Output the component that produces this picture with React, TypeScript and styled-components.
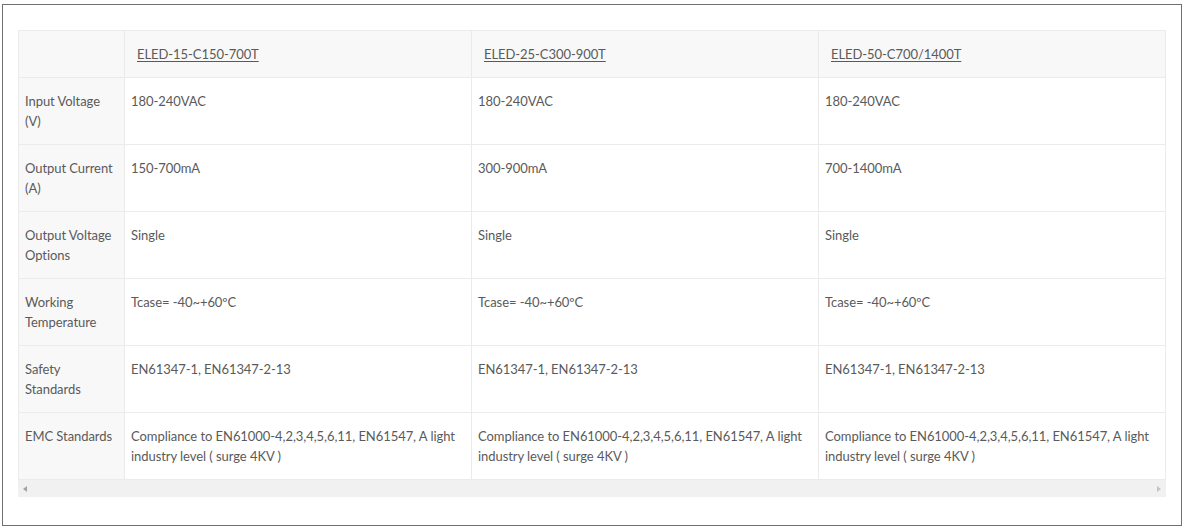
import * as React from "react";
import styled, { createGlobalStyle } from "styled-components";

const GlobalStyle = createGlobalStyle`
  html, body {
    margin: 0;
    padding: 0;
    background: #ffffff;
  }
  body {
    font-family: Lato, "Open Sans", sans-serif;
  }
`;

const Frame = styled.div`
  box-sizing: border-box;
  margin: 4px 0 0 2px;
  width: 1180px;
  height: 522px;
  border: 1px solid #707070;
  padding: 25px 0 0 15px;
`;

const Scroller = styled.div`
  width: 1148px;
`;

const Table = styled.table`
  width: 1148px;
  border-collapse: collapse;
  table-layout: fixed;
  font-size: 13px;
  line-height: 20px;
  letter-spacing: -0.06px;
  color: #5a5a5a;
`;

const Cell = styled.td<{ $head?: boolean; $label?: boolean }>`
  border: 1px solid #ebebeb;
  padding: 13px 6px 13px 6px;
  vertical-align: top;
  text-align: left;
  font-weight: normal;
  background: ${(p) => (p.$head || p.$label ? "#f8f8f8" : "#ffffff")};
  ${(p) => (p.$head ? "padding-left: 12px;" : "")}
`;

const ModelLink = styled.a`
  color: #5a5a5a;
  text-decoration: underline;
  text-underline-offset: 2px;
`;

const ScrollBar = styled.div`
  height: 17px;
  background: #f1f1f1;
  display: flex;
  align-items: center;
  justify-content: space-between;
  padding: 0 5px;
`;

const Arrow = styled.span<{ $dir: "left" | "right" }>`
  width: 0;
  height: 0;
  border-top: 3.5px solid transparent;
  border-bottom: 3.5px solid transparent;
  ${(p) =>
    p.$dir === "left"
      ? "border-right: 4px solid #a3a3a3;"
      : "border-left: 4px solid #c4c4c4;"}
`;

const models = ["ELED-15-C150-700T", "ELED-25-C300-900T", "ELED-50-C700/1400T"];

const rows: { label: string; values: string[] }[] = [
  { label: "Input Voltage (V)", values: ["180-240VAC", "180-240VAC", "180-240VAC"] },
  { label: "Output Current (A)", values: ["150-700mA", "300-900mA", "700-1400mA"] },
  { label: "Output Voltage Options", values: ["Single", "Single", "Single"] },
  {
    label: "Working Temperature",
    values: ["Tcase= -40~+60ºC", "Tcase= -40~+60ºC", "Tcase= -40~+60ºC"],
  },
  {
    label: "Safety Standards",
    values: [
      "EN61347-1, EN61347-2-13",
      "EN61347-1, EN61347-2-13",
      "EN61347-1, EN61347-2-13",
    ],
  },
  {
    label: "EMC Standards",
    values: [
      "Compliance to EN61000-4,2,3,4,5,6,11, EN61547, A light industry level ( surge 4KV )",
      "Compliance to EN61000-4,2,3,4,5,6,11, EN61547, A light industry level ( surge 4KV )",
      "Compliance to EN61000-4,2,3,4,5,6,11, EN61547, A light industry level ( surge 4KV )",
    ],
  },
];

export default function App() {
  return (
    <>
      <GlobalStyle />
      <Frame>
        <Scroller>
          <Table>
            <colgroup>
              <col style={{ width: 106 }} />
              <col style={{ width: 347 }} />
              <col style={{ width: 347 }} />
              <col style={{ width: 347 }} />
            </colgroup>
            <thead>
              <tr>
                <Cell as="th" $head />
                {models.map((m) => (
                  <Cell as="th" $head key={m}>
                    <ModelLink href="#">{m}</ModelLink>
                  </Cell>
                ))}
              </tr>
            </thead>
            <tbody>
              {rows.map((r) => (
                <tr key={r.label}>
                  <Cell $label>{r.label}</Cell>
                  {r.values.map((v, i) => (
                    <Cell key={i}>{v}</Cell>
                  ))}
                </tr>
              ))}
            </tbody>
          </Table>
          <ScrollBar>
            <Arrow $dir="left" />
            <Arrow $dir="right" />
          </ScrollBar>
        </Scroller>
      </Frame>
    </>
  );
}
